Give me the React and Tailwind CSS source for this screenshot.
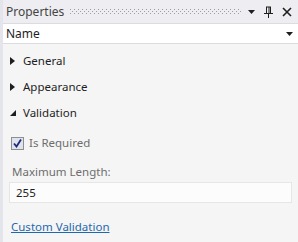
import React from "react";

function Grip() {
  return (
    <svg className="flex-1 h-[5px] mx-[6px]" preserveAspectRatio="none">
      <defs>
        <pattern id="grip" width="4" height="4" patternUnits="userSpaceOnUse">
          <rect x="0" y="0" width="1" height="1" fill="#9a9ca8" />
          <rect x="2" y="2" width="1" height="1" fill="#9a9ca8" />
        </pattern>
      </defs>
      <rect width="100%" height="100%" fill="url(#grip)" />
    </svg>
  );
}

function Caret({ className = "" }) {
  return (
    <svg width="7" height="4" viewBox="0 0 7 4" className={className}>
      <path d="M0 0h7L3.5 4z" fill="#1e1e1e" />
    </svg>
  );
}

function Pin() {
  return (
    <svg width="9" height="12" viewBox="0 0 9 12">
      <path d="M2 1h5M2.5 1v6M6.5 1v6M5 1v6M0 7.5h9M4.5 8v4" stroke="#1e1e1e" strokeWidth="1" fill="none" />
    </svg>
  );
}

function Close() {
  return (
    <svg width="10" height="10" viewBox="0 0 10 10">
      <path d="M1 1l8 8M9 1l-8 8" stroke="#1e1e1e" strokeWidth="1.6" />
    </svg>
  );
}

function Section({ label, open }) {
  return (
    <div className="flex items-center h-[26px] pl-[7px]">
      {open ? (
        <svg width="6" height="6" viewBox="0 0 6 6" className="mr-[7px]">
          <path d="M6 0v6H0z" fill="#1e1e1e" />
        </svg>
      ) : (
        <svg width="5" height="8" viewBox="0 0 5 8" className="mr-[8px]">
          <path d="M0 0l5 4-5 4z" fill="#1e1e1e" />
        </svg>
      )}
      <span>{label}</span>
    </div>
  );
}

export default function App() {
  return (
    <div
      className="w-[298px] h-[242px] bg-[#eeeef2] border-l-[3px] border-[#e4e5eb] flex flex-col text-[11.5px] text-[#1e1e1e] overflow-hidden"
      style={{ fontFamily: '"Segoe UI", "Noto Sans", "Open Sans", sans-serif' }}
    >
      <div className="flex items-center h-[23px] pl-[3px] pr-[6px] bg-[#eeeef2]">
        <span className="text-[#444] text-[12px]">Properties</span>
        <Grip />
        <div className="flex items-center gap-[9px]">
          <Caret />
          <Pin />
          <Close />
        </div>
      </div>
      <div className="flex items-center h-[21px] bg-white border-y border-[#dcdce0] pl-[3px] pr-[5px] justify-between">
        <span className="text-[12px]">Name</span>
        <Caret />
      </div>
      <div className="flex-1 bg-[#f5f5f5] pt-[4px]">
        <Section label="General" />
        <Section label="Appearance" />
        <Section label="Validation" open />
        <div className="flex items-center mt-[9px] pl-[8px] h-[16px]">
          <div className="w-[13px] h-[13px] border border-[#8e8f8f] bg-[#dfe3ee] flex items-center justify-center">
            <svg width="9" height="9" viewBox="0 0 9 9">
              <path d="M1 4.5l2.5 3L8 0.5" stroke="#1c2a78" strokeWidth="1.8" fill="none" />
            </svg>
          </div>
          <span className="ml-[5px] text-[#6d6d6d]">Is Required</span>
        </div>
        <div className="pl-[9px] mt-[12px] text-[#6d6d6d]">Maximum Length:</div>
        <div className="ml-[6px] mr-[6px] mt-[2px] h-[21px] bg-[#fcfcfc] border border-[#e6e6e6] flex items-center pl-[6px]">
          255
        </div>
        <div className="pl-[8px] mt-[15px]">
          <span className="text-[#1f68ad] underline">Custom Validation</span>
        </div>
      </div>
    </div>
  );
}
